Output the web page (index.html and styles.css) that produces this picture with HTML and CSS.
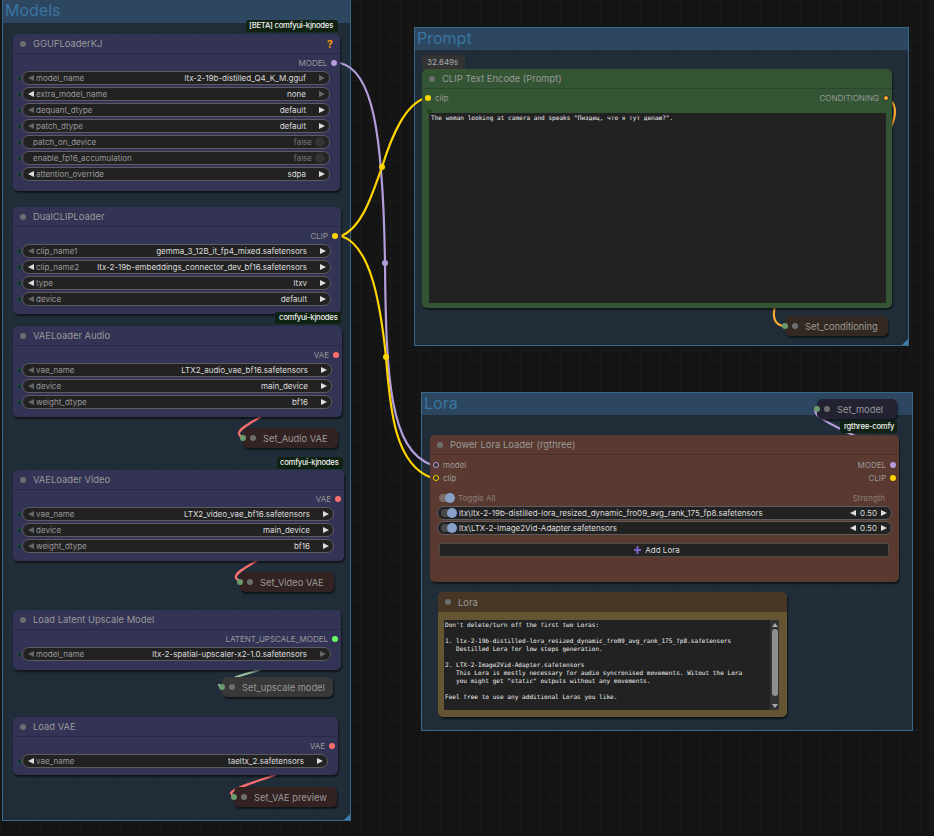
FILE: index.html
```html
<!DOCTYPE html>
<html lang="en">
<head>
    <meta charset="UTF-8">
    <title>ComfyUI</title>
    <link rel="stylesheet" href="styles.css">
</head>
<body>
<div class="canvas">
    <!-- groups -->
    <section class="group group-models"><h2 class="group-title">Models</h2><i class="group-corner"></i></section>
    <section class="group group-prompt"><h2 class="group-title">Prompt</h2><i class="group-corner"></i></section>
    <section class="group group-lora"><h2 class="group-title">Lora</h2></section>

    <!-- links run under the nodes -->
    <svg class="links" width="934" height="836" viewBox="0 0 934 836" fill="none">
        <path class="link-model" d="M340 63C372 70 383 130 385 263C386 380 390 450 432 465"/>
        <path class="link-clip" d="M341 236C362 228 372 195 382 167C392 135 405 105 425 98"/>
        <path class="link-clip" d="M341 236C370 245 380 300 386 357C390 410 395 465 432 478"/>
        <circle class="dot-clip" cx="382" cy="167" r="3"/>
        <circle class="dot-model" cx="385" cy="263" r="3"/>
        <circle class="dot-clip" cx="386" cy="357" r="3"/>
        <path class="link-cond" d="M886 98C896 102 898 112 890 130"/>
        <path class="link-cond" d="M775 306C772 318 775 325 784 326"/>
        <path class="link-model" d="M855 436C838 428 822 420 817 415L815 411"/>
        <path class="link-vae" d="M262 416C248 424 238 430 239 434L241 437"/>
        <path class="link-vae" d="M258 560C244 568 234 574 236 578L239 581"/>
        <path class="link-vae" d="M275 775C255 782 234 788 231 793L233 796"/>
        <path class="link-upscale" d="M259 670L236 677"/>
        <path class="link-upscale" d="M219 685L222 688"/>
    </svg>

    <!-- models column -->
    <span class="badge badge-gguf">[BETA] comfyui-kjnodes</span>
    <article class="node node-blue node-gguf">
        <header class="node-title"><i class="title-dot"></i>GGUFLoaderKJ<b class="missing">?</b></header>
        <div class="slot-row"><span></span><span class="slot-out">MODEL<i class="pin pin-model"></i></span></div>
        <div class="row"><i class="in"></i><div class="widget"><i class="arr-l dim"></i><span class="lbl">model_name</span><span class="val">ltx-2-19b-distilled_Q4_K_M.gguf</span><i class="arr-r dim"></i></div></div>
        <div class="row"><i class="in"></i><div class="widget"><i class="arr-l"></i><span class="lbl">extra_model_name</span><span class="val">none</span><i class="arr-r dim"></i></div></div>
        <div class="row"><i class="in"></i><div class="widget"><i class="arr-l dim"></i><span class="lbl">dequant_dtype</span><span class="val">default</span><i class="arr-r"></i></div></div>
        <div class="row"><i class="in"></i><div class="widget"><i class="arr-l dim"></i><span class="lbl">patch_dtype</span><span class="val">default</span><i class="arr-r"></i></div></div>
        <div class="row"><i class="in"></i><div class="widget widget-toggle"><span class="lbl">patch_on_device</span><span class="val off">false</span><i class="radio"></i></div></div>
        <div class="row"><i class="in"></i><div class="widget widget-toggle"><span class="lbl">enable_fp16_accumulation</span><span class="val off">false</span><i class="radio"></i></div></div>
        <div class="row"><i class="in"></i><div class="widget"><i class="arr-l"></i><span class="lbl">attention_override</span><span class="val">sdpa</span><i class="arr-r"></i></div></div>
    </article>

    <article class="node node-blue node-dual">
        <header class="node-title"><i class="title-dot"></i>DualCLIPLoader</header>
        <div class="slot-row"><span></span><span class="slot-out">CLIP<i class="pin pin-clip"></i></span></div>
        <div class="row"><i class="in"></i><div class="widget"><i class="arr-l dim"></i><span class="lbl">clip_name1</span><span class="val">gemma_3_12B_it_fp4_mixed.safetensors</span><i class="arr-r"></i></div></div>
        <div class="row"><i class="in"></i><div class="widget"><i class="arr-l"></i><span class="lbl">clip_name2</span><span class="val">ltx-2-19b-embeddings_connector_dev_bf16.safetensors</span><i class="arr-r"></i></div></div>
        <div class="row"><i class="in"></i><div class="widget"><i class="arr-l"></i><span class="lbl">type</span><span class="val">ltxv</span><i class="arr-r"></i></div></div>
        <div class="row"><i class="in"></i><div class="widget"><i class="arr-l dim"></i><span class="lbl">device</span><span class="val">default</span><i class="arr-r"></i></div></div>
    </article>

    <span class="badge badge-dual">comfyui-kjnodes</span>
    <article class="node node-blue node-audio">
        <header class="node-title"><i class="title-dot"></i>VAELoader Audio</header>
        <div class="slot-row"><span></span><span class="slot-out">VAE<i class="pin pin-vae"></i></span></div>
        <div class="row"><i class="in"></i><div class="widget"><i class="arr-l dim"></i><span class="lbl">vae_name</span><span class="val">LTX2_audio_vae_bf16.safetensors</span><i class="arr-r"></i></div></div>
        <div class="row"><i class="in"></i><div class="widget"><i class="arr-l dim"></i><span class="lbl">device</span><span class="val">main_device</span><i class="arr-r"></i></div></div>
        <div class="row"><i class="in"></i><div class="widget"><i class="arr-l dim"></i><span class="lbl">weight_dtype</span><span class="val">bf16</span><i class="arr-r"></i></div></div>
    </article>
    <div class="set set-red set-audio"><i class="set-pin"></i><i class="title-dot"></i>Set_Audio VAE</div>

    <span class="badge badge-video">comfyui-kjnodes</span>
    <article class="node node-blue node-video">
        <header class="node-title"><i class="title-dot"></i>VAELoader Video</header>
        <div class="slot-row"><span></span><span class="slot-out">VAE<i class="pin pin-vae"></i></span></div>
        <div class="row"><i class="in"></i><div class="widget"><i class="arr-l dim"></i><span class="lbl">vae_name</span><span class="val">LTX2_video_vae_bf16.safetensors</span><i class="arr-r"></i></div></div>
        <div class="row"><i class="in"></i><div class="widget"><i class="arr-l dim"></i><span class="lbl">device</span><span class="val">main_device</span><i class="arr-r"></i></div></div>
        <div class="row"><i class="in"></i><div class="widget"><i class="arr-l dim"></i><span class="lbl">weight_dtype</span><span class="val">bf16</span><i class="arr-r"></i></div></div>
    </article>
    <div class="set set-red set-video"><i class="set-pin"></i><i class="title-dot"></i>Set_Video VAE</div>

    <article class="node node-blue node-upscale">
        <header class="node-title"><i class="title-dot"></i>Load Latent Upscale Model</header>
        <div class="slot-row"><span></span><span class="slot-out">LATENT_UPSCALE_MODEL<i class="pin pin-upscale"></i></span></div>
        <div class="row"><i class="in"></i><div class="widget"><i class="arr-l dim"></i><span class="lbl">model_name</span><span class="val">ltx-2-spatial-upscaler-x2-1.0.safetensors</span><i class="arr-r dim"></i></div></div>
    </article>
    <div class="set set-gray set-upscale"><i class="set-pin"></i><i class="title-dot"></i>Set_upscale model</div>

    <article class="node node-blue node-vae">
        <header class="node-title"><i class="title-dot"></i>Load VAE</header>
        <div class="slot-row"><span></span><span class="slot-out">VAE<i class="pin pin-vae"></i></span></div>
        <div class="row"><i class="in"></i><div class="widget"><i class="arr-l"></i><span class="lbl">vae_name</span><span class="val">taeltx_2.safetensors</span><i class="arr-r"></i></div></div>
    </article>
    <div class="set set-red set-preview"><i class="set-pin"></i><i class="title-dot"></i>Set_VAE preview</div>

    <!-- prompt -->
    <span class="timing">32.649s</span>
    <article class="node node-green node-clip">
        <header class="node-title"><i class="title-dot"></i>CLIP Text Encode (Prompt)</header>
        <div class="slot-row slot-row-io"><span class="slot-in"><i class="pin pin-clip"></i>clip</span><span class="slot-out">CONDITIONING<i class="pin pin-cond"></i></span></div>
        <pre class="textbox textbox-clip">The woman looking at camera and speaks "Пиздец, что я тут делаю?".</pre>
        <i class="text-pin"></i>
    </article>
    <div class="set set-brown set-cond"><i class="set-pin"></i><i class="title-dot"></i>Set_conditioning</div>

    <!-- lora -->
    <div class="set set-navy set-model"><i class="set-pin"></i><i class="title-dot"></i>Set_model</div>
    <span class="badge badge-rg">rgthree-comfy</span>
    <article class="node node-rust node-power">
        <header class="node-title"><i class="title-dot"></i>Power Lora Loader (rgthree)</header>
        <div class="power-slots">
            <div class="slot-row slot-row-io slot-tight"><span class="slot-in"><i class="pin pin-ring pin-ring-model"></i>model</span><span class="slot-out">MODEL<i class="pin pin-model"></i></span></div>
            <div class="slot-row slot-row-io slot-tight"><span class="slot-in"><i class="pin pin-ring pin-ring-clip"></i>clip</span><span class="slot-out">CLIP<i class="pin pin-clip"></i></span></div>
        </div>
        <div class="toggle-head"><span class="toggle-label"><i class="switch switch-plain"></i>Toggle All</span><span>Strength</span></div>
        <div class="lora-row"><i class="switch"></i><span class="lora-name">ltx\ltx-2-19b-distilled-lora_resized_dynamic_fro09_avg_rank_175_fp8.safetensors</span><span class="strength"><i class="arr-l"></i>0.50<i class="arr-r"></i></span></div>
        <div class="lora-row"><i class="switch"></i><span class="lora-name">ltx\LTX-2-Image2Vid-Adapter.safetensors</span><span class="strength"><i class="arr-l"></i>0.50<i class="arr-r"></i></span></div>
        <div class="add-lora"><svg width="7" height="8" viewBox="0 0 7 8"><path d="M3.5 0v8M0 4h7" stroke="#7c62cc" stroke-width="2"/></svg>Add Lora</div>
    </article>

    <article class="node node-note">
        <header class="node-title"><i class="title-dot"></i>Lora</header>
        <div class="note-body">
<pre class="textbox textbox-note">Don't delete/turn off the first two Loras:

1. ltx-2-19b-distilled-lora_resized_dynamic_fro09_avg_rank_175_fp8.safetensors
   Destilled Lora for low steps generation.

2. LTX-2-Image2Vid-Adapter.safetensors
   This Lora is mostly necessary for audio syncronised movements. Witout the Lora
   you might get "static" outputs without any movements.

Feel free to use any additional Loras you like.</pre>
            <div class="scrollbar"><i class="sb-up"></i><i class="sb-thumb"></i><i class="sb-down"></i></div>
        </div>
    </article>
</div>
</body>
</html>
```

FILE: styles.css
```css
* {
    box-sizing: border-box;
}
html,
body {
    margin: 0;
    padding: 0;
    background: #141414;
}
i {
    display: block;
    font-style: normal;
}
.canvas {
    position: relative;
    width: 934px;
    height: 836px;
    overflow: hidden;
    font-family: Inter, "Liberation Sans", sans-serif;
    background-color: #141414;
    background-image:
        linear-gradient(#191919 1px, transparent 1px),
        linear-gradient(90deg, #191919 1px, transparent 1px);
    background-size: 10px 10px;
}

/* groups */
.group {
    position: absolute;
    background: rgba(44, 70, 92, .5);
    border: 1px solid #38678c;
}
.group-models { left: 2px; top: -4px; width: 349px; height: 825px; }
.group-prompt { left: 414px; top: 27px; width: 495px; height: 319px; }
.group-lora { left: 421px; top: 392px; width: 492px; height: 339px; }
.group-title {
    margin: 0;
    height: 22px;
    padding-left: 2px;
    font-size: 16px;
    line-height: 21px;
    font-weight: 400;
    color: #38749f;
    background: rgba(50, 78, 108, .8);
}
.group-models .group-title { height: 26px; line-height: 26px; }
.group-corner {
    position: absolute;
    right: 0;
    bottom: 0;
    border: 3px solid transparent;
    border-right-color: #3d7eb0;
    border-bottom-color: #3d7eb0;
}

/* links */
.links {
    position: absolute;
    left: 0;
    top: 0;
    stroke-linecap: round;
}
.links path { stroke-width: 2.2; }
.link-model { stroke: #b39ddb; }
.link-clip { stroke: #ffd500; }
.link-cond { stroke: #ffa931; }
.link-vae { stroke: #ff6e6e; }
.link-upscale { stroke: #9fc39f; }
.dot-clip { fill: #ffd500; }
.dot-model { fill: #b39ddb; }

/* nodes */
.node {
    position: absolute;
    border-radius: 5px;
    box-shadow: 1px 2px 2px rgba(0, 0, 0, .55);
}
.node-blue { background: #333355; }
.node-green { background: #335533; }
.node-rust { background: #593930; }
.node-note { background: #665533; }

.node-gguf { left: 13px; top: 34px; width: 327px; height: 157px; }
.node-dual { left: 13px; top: 207px; width: 328px; height: 107px; }
.node-audio { left: 13px; top: 326px; width: 329px; height: 91px; }
.node-video { left: 13px; top: 470px; width: 331px; height: 91px; }
.node-upscale { left: 13px; top: 610px; width: 328px; height: 60px; }
.node-vae { left: 13px; top: 717px; width: 325px; height: 58px; }
.node-clip { left: 422px; top: 69px; width: 470px; height: 239px; }
.node-power { left: 430px; top: 435px; width: 469px; height: 147px; }
.node-note { left: 438px; top: 592px; width: 349px; height: 125px; }

.node-title {
    display: flex;
    align-items: center;
    gap: 7px;
    height: 20px;
    padding: 0 7px;
    font-size: 9.4px;
    color: #999;
    border-bottom: 1px solid rgba(0, 0, 0, .16);
    border-radius: 5px 5px 0 0;
}
.node-note .node-title {
    background: #473726;
    border-bottom: 0;
}
.title-dot {
    flex: none;
    width: 6px;
    height: 6px;
    border-radius: 50%;
    background: #6e6e6e;
}
.missing {
    margin-left: auto;
    font-size: 11px;
    color: #f09a0a;
}

/* slots */
.slot-row {
    display: flex;
    justify-content: space-between;
    align-items: center;
    height: 17px;
    padding: 2px 0 1px;
    font-size: 8px;
    color: #999;
}
.slot-in,
.slot-out {
    display: flex;
    align-items: center;
    gap: 4px;
}
.slot-in { padding-left: 3px; }
.slot-out { padding-right: 3px; }
.slot-row-io { height: 18px; padding: 0; }
.power-slots { padding-top: 3px; }
.slot-tight { height: 13px; }
.pin {
    width: 6px;
    height: 6px;
    border-radius: 50%;
}
.pin-model { background: #b39ddb; }
.pin-clip { background: #ffd500; }
.pin-vae { background: #ff6e6e; }
.pin-upscale { background: #66ff66; }
.pin-cond { background: #ffa931; border: 1px solid #2b2b2b; }
.pin-ring { background: #33302c; border: 1.5px solid #b39ddb; }
.pin-ring-clip { border-color: #ffd500; }

/* combo widgets */
.row {
    display: flex;
    align-items: center;
    height: 14px;
    margin-bottom: 2px;
    padding: 0 10px 0 4px;
}
.in {
    flex: none;
    width: 5px;
    height: 5px;
    border-radius: 50%;
    background: #1b2f33;
    border: 1px solid #1d4a46;
}
.widget {
    display: flex;
    flex: 1;
    align-items: center;
    min-width: 0;
    height: 14px;
    padding: 0 4px 0 5px;
    font-size: 8px;
    background: #222;
    border: 1px solid #5c5c5c;
    border-radius: 7px;
}
.widget-toggle { padding: 0 1px 0 10px; }
.lbl {
    flex: none;
    color: #999;
}
.val {
    flex: 1;
    padding-right: 13px;
    text-align: right;
    white-space: nowrap;
    color: #ddd;
}
.val.off {
    padding-right: 3px;
    color: #777;
}
.arr-l,
.arr-r {
    flex: none;
    width: 0;
    height: 0;
    border-top: 3px solid transparent;
    border-bottom: 3px solid transparent;
}
.arr-l { border-right: 6px solid #ddd; margin-right: 2px; }
.arr-r { border-left: 6px solid #ddd; }
.arr-l.dim { border-right-color: #666; }
.arr-r.dim { border-left-color: #666; }
.radio {
    flex: none;
    width: 10px;
    height: 10px;
    margin-right: 3px;
    border-radius: 50%;
    background: #333;
}

/* set / get nodes */
.set {
    position: absolute;
    display: flex;
    align-items: center;
    height: 20px;
    padding-left: 7px;
    gap: 7px;
    font-size: 9.3px;
    color: #999;
    border-radius: 5px;
    box-shadow: 1px 2px 2px rgba(0, 0, 0, .55);
}
.set-pin {
    position: absolute;
    left: -3px;
    top: 7px;
    width: 6px;
    height: 6px;
    border-radius: 50%;
    background: #6b9a6b;
}
.set-red { background: #332222; }
.set-gray { background: #383838; }
.set-brown { background: #332922; }
.set-navy { background: #222233; }
.set-audio { left: 243px; top: 428px; width: 95px; }
.set-video { left: 240px; top: 572px; width: 94px; }
.set-upscale { left: 222px; top: 677px; width: 111px; }
.set-preview { left: 234px; top: 787px; width: 103px; }
.set-cond { left: 785px; top: 316px; width: 103px; }
.set-model { left: 817px; top: 399px; width: 80px; }

/* badges */
.badge {
    position: absolute;
    height: 12px;
    padding: 0 3px;
    font-size: 7.7px;
    font-weight: 500;
    line-height: 12px;
    white-space: nowrap;
    letter-spacing: -.25px;
    color: #f0f0f0;
    background: #0f2212;
    border-radius: 3px;
}
.badge-gguf { left: 246px; top: 20px; width: 92px; }
.badge-dual { left: 275px; top: 312px; width: 66px; padding-left: 4px; }
.badge-video { left: 277px; top: 457px; width: 66px; padding-left: 3px; }
.badge-rg { left: 840px; top: 421px; width: 57px; padding-left: 4px; }
.timing {
    position: absolute;
    left: 422px;
    top: 55px;
    width: 43px;
    height: 14px;
    padding-left: 5px;
    font-size: 8px;
    line-height: 14px;
    color: #aaa;
    background: #333;
    border-radius: 3px 3px 0 0;
}

/* text areas */
.textbox {
    margin: 0;
    padding: 1px 2px;
    font-family: "DejaVu Sans Mono", "Liberation Mono", monospace;
    font-size: 6.1px;
    line-height: 8px;
    color: #f0f0f0;
    background: #222;
    overflow: hidden;
}
.textbox-clip {
    height: 190px;
    margin: 6px 6px 0 7px;
}
.text-pin {
    position: absolute;
    left: 5px;
    top: 40px;
    width: 5px;
    height: 5px;
    border-radius: 50%;
    background: #234423;
    border: 1px solid #1d4a1d;
}
.note-body {
    display: flex;
    height: 90px;
    margin: 8px 8px 0 6px;
    background: #222;
}
.textbox-note {
    flex: 1;
    height: 90px;
    padding-left: 1px;
}
.scrollbar {
    flex: none;
    display: flex;
    flex-direction: column;
    align-items: center;
    width: 9px;
    height: 90px;
    padding: 3px 0 2px;
    background: #333;
}
.sb-up,
.sb-down {
    width: 0;
    height: 0;
    border-left: 3px solid transparent;
    border-right: 3px solid transparent;
}
.sb-up { border-bottom: 4px solid #aaa; }
.sb-down { border-top: 4px solid #aaa; }
.sb-thumb {
    flex: 1;
    width: 6px;
    margin: 2px 0 8px;
    background: #8f8f8f;
    border-radius: 3px;
}

/* rgthree lora rows */
.toggle-head {
    display: flex;
    justify-content: space-between;
    align-items: center;
    height: 15px;
    margin-top: 6px;
    padding: 0 14px 0 9px;
    font-size: 8px;
    color: #8c7f78;
}
.toggle-label {
    display: flex;
    align-items: center;
    gap: 4px;
}
.switch {
    position: relative;
    flex: none;
    width: 15px;
    height: 8px;
    border-radius: 4px;
    background: #4a4a4a;
}
.switch-plain { background: #7a6b64; }
.switch:after {
    content: "";
    position: absolute;
    right: -1px;
    top: -1px;
    width: 10px;
    height: 10px;
    border-radius: 50%;
    background: #89a0c8;
}
.lora-row {
    display: flex;
    align-items: center;
    gap: 3px;
    height: 14px;
    margin: 1px 7px 1px;
    padding: 0 4px 0 3px;
    font-size: 8px;
    color: #ddd;
    background: #222;
    border: 1px solid #5c5c5c;
    border-radius: 7px;
}
.lora-name { flex: 1; white-space: nowrap; }
.strength {
    display: flex;
    align-items: center;
}
.strength .arr-l { margin-right: 4px; }
.strength .arr-r { margin-left: 4px; }
.add-lora {
    display: flex;
    justify-content: center;
    align-items: center;
    gap: 4px;
    height: 14px;
    margin: 8px 10px 0 9px;
    padding-right: 14px;
    font-size: 8px;
    color: #ddd;
    background: #222;
    border: 1px solid #4a4a4a;
    border-radius: 2px;
}
```
